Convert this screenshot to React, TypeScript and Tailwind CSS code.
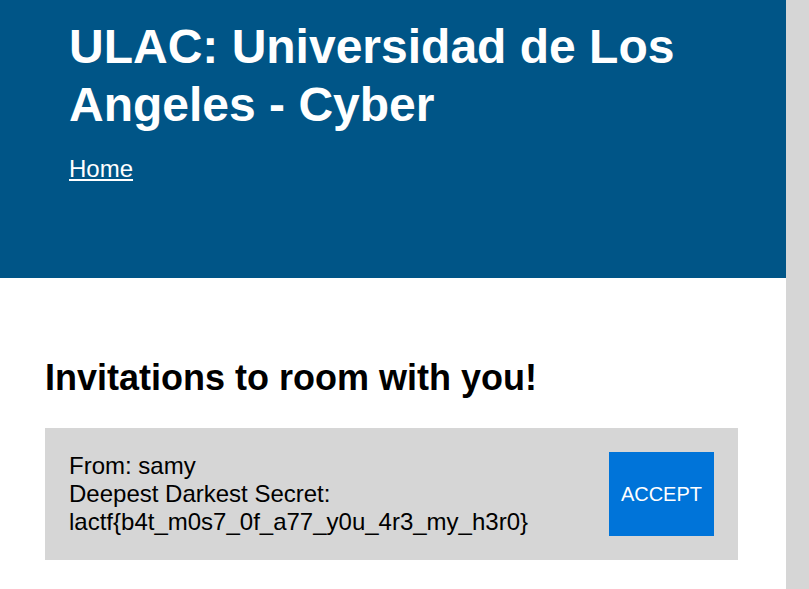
import React from "react";

export default function App() {
  return (
    <div
      className="flex h-[589px] w-[809px] overflow-hidden bg-white"
      style={{ fontFamily: '"Liberation Sans", Arial, sans-serif' }}
    >
      <div className="flex min-w-0 flex-1 flex-col">
        <header className="h-[278px] shrink-0 bg-[#005587] pl-[69px] pr-[65px] pt-[18px] text-white">
          <h1 className="text-[48px] font-bold leading-[1.2]">
            ULAC: Universidad de Los Angeles - Cyber
          </h1>
          <nav className="mt-[22px]">
            <a href="#" className="text-[24px] leading-[normal] text-white underline">
              Home
            </a>
          </nav>
        </header>
        <main className="pl-[45px] pr-[48px] pt-[79px]">
          <h2 className="text-[36px] font-bold leading-[normal] text-black">
            Invitations to room with you!
          </h2>
          <div className="mt-[29px] flex items-stretch justify-between bg-[#d6d6d6] p-[24px]">
            <div className="text-[24px] leading-[normal] text-black">
              <div>From: samy</div>
              <div>Deepest Darkest Secret:</div>
              <div>lactf{"{"}b4t_m0s7_0f_a77_y0u_4r3_my_h3r0{"}"}</div>
            </div>
            <button className="bg-[#0074d9] px-[12px] text-[20px] leading-[normal] text-white">
              ACCEPT
            </button>
          </div>
        </main>
      </div>
      <div className="h-full w-[23px] shrink-0 bg-[#d6d6d6]" />
    </div>
  );
}
